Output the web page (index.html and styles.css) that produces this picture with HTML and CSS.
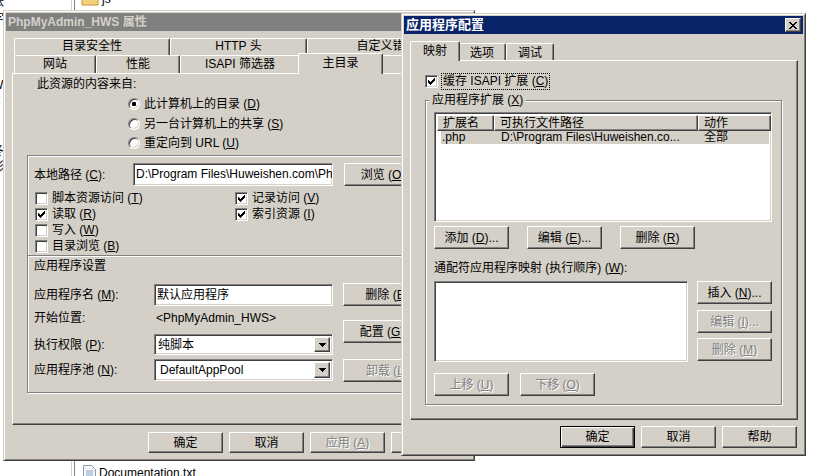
FILE: index.html
```html
<!DOCTYPE html>
<html lang="zh-CN">
<head>
    <meta charset="UTF-8">
    <meta name="viewport" content="width=device-width, initial-scale=1.0">
    <title>应用程序配置</title>
    <link rel="stylesheet" href="styles.css">
</head>
<body>
<div class="desktop">

    <!-- explorer window behind the dialogs -->
    <div class="explorer">
        <div class="tree">
            <div>帐</div>
            <div>字</div>
            <div>&nbsp;</div>
            <div>T</div>
            <div>T</div>
            <div>W</div>
            <div>C</div>
            <div>F</div>
            <div>E</div>
            <div>冬</div>
            <div>彩</div>
        </div>
        <div class="splitter"></div>
        <div class="files">
            <div class="file file-top">
                <svg class="folder-icon" width="18" height="14" viewBox="0 0 18 14">
                    <path d="M1 2h6l2 2h8v9H1z" fill="#f4d27a" stroke="#c9962b"/>
                </svg>
                <span>js</span>
            </div>
            <div class="file file-bottom">
                <svg class="doc-icon" width="13" height="16" viewBox="0 0 13 16">
                    <path d="M0.5 0.5h8l4 4v11h-12z" fill="#f4f6fa" stroke="#8a9bb4"/>
                    <path d="M3 6h7M3 8h7M3 10h7M3 12h7" stroke="#8aa3c8"/>
                </svg>
                <span>Documentation.txt</span>
            </div>
        </div>
    </div>

    <!-- properties dialog (inactive) -->
    <div class="win props">
        <div class="caption inactive">
            <span class="caption-text">PhpMyAdmin_HWS 属性</span>
        </div>
        <div class="tabs">
            <div class="tab-row">
                <div class="tab t-dirsec">目录安全性</div>
                <div class="tab t-http">HTTP 头</div>
                <div class="tab t-custom">自定义错误</div>
            </div>
            <div class="tab-row front-row">
                <div class="tab t-site">网站</div>
                <div class="tab t-perf">性能</div>
                <div class="tab t-isapi">ISAPI 筛选器</div>
                <div class="tab selected t-home">主目录</div>
                <div class="tab t-docs">文档</div>
            </div>
        </div>
        <div class="panel props-panel">
            <div class="source-title">此资源的内容来自:</div>
            <div class="radios">
                <div class="radio-row"><span class="radio on"><span class="dot"></span></span><span>此计算机上的目录 (<u>D</u>)</span></div>
                <div class="radio-row"><span class="radio"></span><span>另一台计算机上的共享 (<u>S</u>)</span></div>
                <div class="radio-row"><span class="radio"></span><span>重定向到 URL (<u>U</u>)</span></div>
            </div>
            <div class="frame">
                <div class="path-row">
                    <span class="path-label">本地路径 (<u>C</u>):</span>
                    <div class="sunken path-box">D:\Program Files\Huweishen.com\PhpMyAdmin_HWS</div>
                    <button class="btn side-btn">浏览 (<u>O</u>)...</button>
                </div>
                <div class="perm-grid">
                    <div class="check-row"><span class="check"></span><span>脚本资源访问 (<u>T</u>)</span></div>
                    <div class="check-row"><span class="check on"><svg width="7" height="7" viewBox="0 0 7 7"><path d="M0 2h1v3H0zM1 3h1v3H1zM2 4h1v3H2zM3 3h1v3H3zM4 2h1v3H4zM5 1h1v3H5zM6 0h1v3H6z"/></svg></span><span>记录访问 (<u>V</u>)</span></div>
                    <div class="check-row"><span class="check on"><svg width="7" height="7" viewBox="0 0 7 7"><path d="M0 2h1v3H0zM1 3h1v3H1zM2 4h1v3H2zM3 3h1v3H3zM4 2h1v3H4zM5 1h1v3H5zM6 0h1v3H6z"/></svg></span><span>读取 (<u>R</u>)</span></div>
                    <div class="check-row"><span class="check on"><svg width="7" height="7" viewBox="0 0 7 7"><path d="M0 2h1v3H0zM1 3h1v3H1zM2 4h1v3H2zM3 3h1v3H3zM4 2h1v3H4zM5 1h1v3H5zM6 0h1v3H6z"/></svg></span><span>索引资源 (<u>I</u>)</span></div>
                    <div class="check-row"><span class="check"></span><span>写入 (<u>W</u>)</span></div>
                    <div class="check-row first-col"><span class="check"></span><span>目录浏览 (<u>B</u>)</span></div>
                </div>
                <div class="sep"></div>
                <div class="app-title">应用程序设置</div>
                <div class="app-settings">
                    <div class="app-fields">
                        <div class="field-row name-row">
                            <span class="field-label">应用程序名 (<u>M</u>):</span>
                            <div class="sunken app-box">默认应用程序</div>
                        </div>
                        <div class="field-row start-row">
                            <span class="field-label">开始位置:</span>
                            <span class="start-value">&lt;PhpMyAdmin_HWS&gt;</span>
                        </div>
                        <div class="field-row exec-row">
                            <span class="field-label">执行权限 (<u>P</u>):</span>
                            <div class="sunken select">
                                <span class="select-text">纯脚本</span>
                                <span class="select-btn"><svg width="7" height="4" viewBox="0 0 7 4"><path d="M0 0h7v1H6v1H5v1H4v1H3V3H2V2H1V1H0z"/></svg></span>
                            </div>
                        </div>
                        <div class="field-row pool-row">
                            <span class="field-label">应用程序池 (<u>N</u>):</span>
                            <div class="sunken select">
                                <span class="select-text">DefaultAppPool</span>
                                <span class="select-btn"><svg width="7" height="4" viewBox="0 0 7 4"><path d="M0 0h7v1H6v1H5v1H4v1H3V3H2V2H1V1H0z"/></svg></span>
                            </div>
                        </div>
                    </div>
                    <div class="app-buttons">
                        <button class="btn side-btn b-remove">删除 (<u>E</u>)</button>
                        <button class="btn side-btn b-config">配置 (<u>G</u>)...</button>
                        <button class="btn side-btn b-unload" disabled>卸载 (<u>L</u>)</button>
                    </div>
                </div>
            </div>
        </div>
        <div class="dlg-buttons">
            <button class="btn">确定</button>
            <button class="btn">取消</button>
            <button class="btn" disabled>应用 (<u>A</u>)</button>
            <button class="btn">帮助</button>
        </div>
    </div>

    <!-- application configuration dialog (active) -->
    <div class="win appcfg">
        <div class="caption">
            <span class="caption-text">应用程序配置</span>
            <span class="close-btn">
                <svg width="8" height="7" viewBox="0 0 8 7"><path d="M0 0h2v1H0zM6 0h2v1H6zM1 1h2v1H1zM5 1h2v1H5zM2 2h4v1H2zM3 3h2v1H3zM2 4h4v1H2zM1 5h2v1H1zM5 5h2v1H5zM0 6h2v1H0zM6 6h2v1H6z"/></svg>
            </span>
        </div>
        <div class="tabs">
            <div class="tab-row cfg-row">
                <div class="tab selected t-map">映射</div>
                <div class="tab t-opt">选项</div>
                <div class="tab t-debug">调试</div>
            </div>
        </div>
        <div class="panel cfg-panel">
            <div class="cache-row">
                <span class="check on"><svg width="7" height="7" viewBox="0 0 7 7"><path d="M0 2h1v3H0zM1 3h1v3H1zM2 4h1v3H2zM3 3h1v3H3zM4 2h1v3H4zM5 1h1v3H5zM6 0h1v3H6z"/></svg></span>
                <span class="focus">缓存 ISAPI 扩展 (<u>C</u>)</span>
            </div>
            <div class="group">
                <div class="group-title">应用程序扩展 (<u>X</u>)</div>
                <div class="sunken listview">
                    <div class="lv-head">
                        <div class="lv-col c-ext">扩展名</div>
                        <div class="lv-col c-path">可执行文件路径</div>
                        <div class="lv-col c-verb">动作</div>
                    </div>
                    <div class="lv-item">
                        <span class="c-ext">.php</span>
                        <span class="c-path">D:\Program Files\Huweishen.co...</span>
                        <span class="c-verb">全部</span>
                    </div>
                </div>
                <div class="btn-row">
                    <button class="btn">添加 (<u>D</u>)...</button>
                    <button class="btn">编辑 (<u>E</u>)...</button>
                    <button class="btn">删除 (<u>R</u>)</button>
                </div>
                <div class="wild-title">通配符应用程序映射 (执行顺序) (<u>W</u>):</div>
                <div class="wild-row">
                    <div class="sunken listbox"></div>
                    <div class="wild-buttons">
                        <button class="btn">插入 (<u>N</u>)...</button>
                        <button class="btn" disabled>编辑 (<u>I</u>)...</button>
                        <button class="btn" disabled>删除 (<u>M</u>)</button>
                    </div>
                </div>
                <div class="move-row">
                    <button class="btn" disabled>上移 (<u>U</u>)</button>
                    <button class="btn" disabled>下移 (<u>O</u>)</button>
                </div>
            </div>
        </div>
        <div class="dlg-buttons">
            <button class="btn default">确定</button>
            <button class="btn">取消</button>
            <button class="btn">帮助</button>
        </div>
    </div>

</div>
</body>
</html>
```

FILE: styles.css
```css
* {
    box-sizing: border-box;
}

body {
    margin: 0;
    width: 830px;
    height: 476px;
    overflow: hidden;
    background: #fff;
    font-family: "Liberation Sans", "Noto Sans CJK SC", sans-serif;
    font-size: 12px;
    line-height: 16px;
    color: #000;
}

u {
    text-decoration: underline;
    text-underline-offset: 1px;
}

.desktop {
    position: relative;
    width: 830px;
    height: 476px;
    overflow: hidden;
}

/* explorer in the background */
.explorer {
    display: flex;
    height: 476px;
}

.tree {
    width: 71px;
    margin-top: -6px;
    line-height: 16.5px;
    overflow: hidden;
}

.tree div {
    margin-left: -8px;
}

.splitter {
    width: 4px;
    border-left: 1px solid #d4d0c8;
    border-right: 1px solid #808080;
}

.files {
    flex: 1;
    display: flex;
    flex-direction: column;
    justify-content: space-between;
    padding-left: 6px;
}

.file {
    display: flex;
    align-items: center;
    gap: 3px;
}

.file-top {
    margin-top: -9px;
}

.file-bottom {
    margin-bottom: -5px;
    padding-left: 2px;
}

/* windows */
.win {
    position: absolute;
    display: flex;
    flex-direction: column;
    padding: 2px;
    background: #d4d0c8;
    border: 1px solid;
    border-color: #d4d0c8 #404040 #404040 #d4d0c8;
    box-shadow: inset 1px 1px #fff, inset -1px -1px #808080;
}

.props {
    left: 3px;
    top: 10px;
    width: 472px;
    height: 451px;
}

.appcfg {
    left: 401px;
    top: 13px;
    width: 405px;
    height: 443px;
}

.caption {
    height: 18px;
    display: flex;
    align-items: center;
    justify-content: space-between;
    padding: 0 2px 0 2px;
    background: #0a246a;
    color: #fff;
    font-weight: bold;
    font-size: 13px;
}

.caption.inactive {
    background: #808080;
    color: #d4d0c8;
    font-size: 12px;
}

.close-btn {
    width: 16px;
    height: 14px;
    display: flex;
    align-items: center;
    justify-content: center;
    background: #d4d0c8;
    border: 1px solid;
    border-color: #fff #404040 #404040 #fff;
    box-shadow: inset -1px -1px #808080;
}

/* tabs */
.tabs {
    margin-left: 8px;
}

.props .tabs {
    margin-top: 7px;
}

.appcfg .tabs {
    margin-top: 9px;
}

.tab-row {
    display: flex;
    align-items: flex-start;
    height: 17px;
}

.tab {
    flex: none;
    height: 17px;
    background: #d4d0c8;
    border: 1px solid;
    border-bottom: 0;
    border-color: #fff #404040 #fff #fff;
    border-radius: 2px 2px 0 0;
    box-shadow: inset -1px 0 #808080;
    text-align: center;
    line-height: 15px;
    white-space: nowrap;
    overflow: hidden;
}

.tab-row.front-row {
    height: 18px;
}

.front-row .tab {
    height: 18px;
    line-height: 16px;
}

.tab.selected {
    position: relative;
    z-index: 1;
    margin: -2px -2px 0;
}

.front-row .tab.selected {
    height: 21px;
    line-height: 18px;
}

.cfg-row .tab {
    padding-top: 2px;
}

.cfg-row .tab.selected {
    height: 20px;
    padding-top: 1px;
    line-height: 17px;
}

.t-dirsec { width: 156px; }
.t-http { width: 137px; }
.t-custom { width: 159px; }
.t-site { width: 82px; }
.t-perf { width: 84px; }
.t-isapi { width: 120px; }
.t-home { width: 85px; }
.t-docs { width: 85px; }
.t-map { width: 50px; }
.t-opt { width: 48px; }
.t-debug { width: 48px; }

/* tab panel */
.panel {
    background: #d4d0c8;
    border: 1px solid;
    border-color: #fff #404040 #404040 #fff;
    box-shadow: inset -1px -1px #808080;
}

.props-panel {
    height: 352px;
    margin: 0 6px 0 6px;
}

.cfg-panel {
    height: 360px;
    margin: 0 5px 0 6px;
}

/* common controls */
.btn {
    flex: none;
    width: 75px;
    height: 23px;
    padding: 0;
    font: inherit;
    color: #000;
    white-space: nowrap;
    background: #d4d0c8;
    border: 1px solid;
    border-color: #fff #404040 #404040 #fff;
    box-shadow: inset -1px -1px #808080;
}

.btn:disabled {
    color: #808080;
    text-shadow: 1px 1px #fff;
}

.btn.default {
    border: 1px solid #000;
    box-shadow: inset 1px 1px #fff, inset -1px -1px #404040, inset -2px -2px #808080;
}

.sunken {
    background: #fff;
    border: 1px solid;
    border-color: #808080 #fff #fff #808080;
    box-shadow: inset 1px 1px #404040, inset -1px -1px #d4d0c8;
}

.check {
    flex: none;
    width: 13px;
    height: 13px;
    display: flex;
    align-items: center;
    justify-content: center;
    background: #fff;
    border: 1px solid;
    border-color: #808080 #fff #fff #808080;
    box-shadow: inset 1px 1px #404040, inset -1px -1px #d4d0c8;
}

.radio {
    flex: none;
    width: 12px;
    height: 12px;
    display: flex;
    align-items: center;
    justify-content: center;
    background: #fff;
    border-radius: 50%;
    border: 1px solid;
    border-color: #808080 #fff #fff #808080;
    box-shadow: inset 1px 1px #404040, inset -1px -1px #d4d0c8;
}

.dot {
    width: 4px;
    height: 4px;
    border-radius: 1px;
    background: #000;
}

.dlg-buttons {
    display: flex;
    justify-content: flex-end;
    gap: 6px;
    margin-right: 6px;
}

.dlg-buttons .btn {
    height: 21px;
}

.props .dlg-buttons {
    margin-top: 7px;
}

.appcfg .dlg-buttons {
    margin-top: 6px;
}

.appcfg .dlg-buttons .btn {
    height: 22px;
}

/* home directory page */
.source-title {
    margin: 2px 0 0 24px;
}

.radios {
    margin: 2px 0 0 115px;
}

.radio-row {
    display: flex;
    align-items: center;
    gap: 4px;
    height: 19px;
}

.radio-row:first-child {
    height: 20px;
}

.frame {
    height: 238px;
    margin: 3px 14px 0 14px;
    border: 1px solid #808080;
    box-shadow: inset 1px 1px #fff, 1px 1px #fff;
}

.path-row {
    display: flex;
    align-items: center;
    height: 23px;
    margin: 7px 0 0 6px;
}

.path-label {
    width: 99px;
}

.path-box {
    width: 200px;
    height: 23px;
    padding: 0 2px;
    line-height: 21px;
    white-space: nowrap;
    overflow: hidden;
}

.side-btn {
    width: 88px;
    margin-left: 11px;
}

.perm-grid {
    display: grid;
    grid-template-columns: 200px 200px;
    grid-auto-rows: 16px;
    margin: 4px 0 0 7px;
}

.check-row {
    display: flex;
    align-items: center;
    gap: 4px;
}

.first-col {
    grid-column: 1;
}

.sep {
    height: 2px;
    margin-top: 1px;
    border-top: 1px solid #808080;
    border-bottom: 1px solid #fff;
}

.app-title {
    margin: 1px 0 0 6px;
}

.app-settings {
    display: flex;
    margin: 10px 0 0 6px;
}

.field-row {
    display: flex;
    align-items: center;
}

.field-label {
    width: 120px;
}

.name-row {
    height: 22px;
}

.start-row {
    height: 24px;
}

.exec-row {
    height: 21px;
    margin-top: 4px;
}

.pool-row {
    height: 22px;
    margin-top: 4px;
}

.app-box {
    width: 179px;
    height: 22px;
    padding: 0 2px;
    line-height: 20px;
}

.start-value {
    padding-left: 2px;
}

.select {
    width: 179px;
    height: 100%;
    display: flex;
    padding: 2px;
}

.select-text {
    flex: 1;
    padding-left: 1px;
    line-height: 16px;
}

.pool-row .select-text {
    padding-left: 3px;
}

.select-btn {
    width: 16px;
    display: flex;
    align-items: center;
    justify-content: center;
    background: #d4d0c8;
    border: 1px solid;
    border-color: #fff #404040 #404040 #fff;
    box-shadow: inset -1px -1px #808080;
}

.app-buttons {
    display: flex;
    flex-direction: column;
}

.app-buttons .side-btn {
    margin-left: 10px;
}

.b-remove {
    margin-top: -1px;
}

.b-config {
    margin-top: 14px;
}

.b-unload {
    margin-top: 16px;
}

/* mappings page */
.cache-row {
    display: flex;
    align-items: center;
    height: 17px;
    margin: 12px 0 0 14px;
}

.focus {
    height: 17px;
    margin-left: 3px;
    padding: 0 1px;
    line-height: 15px;
    border: 1px dotted #000;
}

.group {
    width: 357px;
    height: 305px;
    margin: 10px 0 0 14px;
    border: 1px solid #808080;
    box-shadow: inset 1px 1px #fff, 1px 1px #fff;
}

.group-title {
    width: fit-content;
    margin: -9px 0 0 3px;
    padding: 0 3px;
    background: #d4d0c8;
}

.listview {
    width: 338px;
    height: 110px;
    margin: 4px 0 0 8px;
    padding: 2px;
}

.lv-head {
    display: flex;
    height: 16px;
}

.lv-col {
    flex: none;
    padding-left: 5px;
    line-height: 14px;
    background: #d4d0c8;
    border: 1px solid;
    border-color: #fff #404040 #404040 #fff;
    box-shadow: inset -1px -1px #808080;
}

.lv-col.c-ext { width: 57px; }
.lv-col.c-path { width: 204px; }
.lv-col.c-verb { width: 73px; }

.lv-item {
    display: flex;
    height: 13px;
    margin-left: 4px;
    line-height: 13px;
    background: #d4d0c8;
    white-space: nowrap;
}

.lv-item .c-ext {
    width: 53px;
    padding-left: 1px;
}

.lv-item .c-path {
    width: 204px;
    padding-left: 7px;
}

.lv-item .c-verb {
    padding-left: 6px;
}

.btn-row {
    display: flex;
    gap: 18px;
    margin: 4px 0 0 8px;
}

.wild-title {
    margin: 11px 0 0 8px;
}

.wild-row {
    display: flex;
    margin: 5px 0 0 8px;
}

.listbox {
    width: 254px;
    height: 81px;
}

.wild-buttons {
    display: flex;
    flex-direction: column;
    margin-left: 9px;
}

.wild-buttons .btn:nth-child(2) {
    margin-top: 6px;
}

.wild-buttons .btn:nth-child(3) {
    margin-top: 5px;
}

.move-row {
    display: flex;
    gap: 11px;
    margin: 11px 0 0 8px;
}
```
